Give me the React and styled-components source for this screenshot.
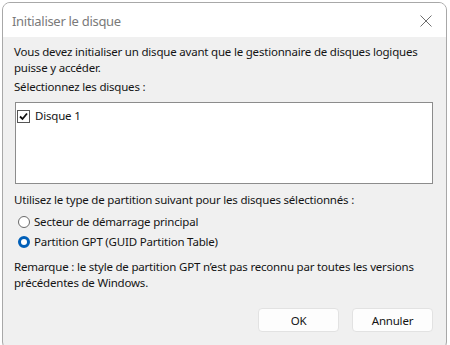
import React from 'react';
import styled, { createGlobalStyle } from 'styled-components';

//----------------------------------------
// Styled Components
//----------------------------------------

const GlobalStyle = createGlobalStyle`
  html, body {
    margin: 0;
    padding: 0;
    background: #ffffff;
    overflow: hidden;
  }
  body {
    font-family: "Noto Sans", "Open Sans", sans-serif;
  }
`;

const Window = styled.div`
  box-sizing: border-box;
  margin: 2px 0 0 2px;
  width: 445px;
  height: 348px;
  border: 1px solid #a8a8a8;
  border-radius: 8px;
  overflow: hidden;
  display: flex;
  flex-direction: column;
  background: #f0f0f0;
`;

const TitleBar = styled.div`
  height: 33px;
  flex: none;
  background: #ffffff;
  display: flex;
  align-items: center;
  justify-content: space-between;
  padding: 1px 9px 0 9px;
`;

const Title = styled.span`
  font-size: 13px;
  letter-spacing: -0.3px;
  color: #7a7a7a;
`;

const CloseButton = styled.button`
  width: 22px;
  height: 22px;
  border: none;
  background: transparent;
  padding: 0;
  display: flex;
  align-items: center;
  justify-content: center;
`;

const Body = styled.div`
  flex: 1;
  display: flex;
  flex-direction: column;
  padding: 7px 13px 0 11px;
  color: #141414;
  font-size: 11.5px;
  letter-spacing: -0.2px;
  line-height: 16px;
`;

const Text = styled.p`
  margin: 0 0 ${({ gap }) => gap || 0}px 0;
`;

const ListBox = styled.div`
  box-sizing: border-box;
  height: 82px;
  margin: 0 0 8px 1px;
  background: #ffffff;
  border: 1px solid #8c8c8c;
  padding: 5px 1px;
`;

const CheckRow = styled.label`
  display: flex;
  align-items: center;
  gap: 5px;
`;

const CheckBox = styled.span`
  box-sizing: border-box;
  width: 13px;
  height: 13px;
  border: 1px solid #555;
  background: #fff;
  display: flex;
  align-items: center;
  justify-content: center;
`;

const RadioGroup = styled.div`
  display: flex;
  flex-direction: column;
  gap: 4px;
  margin: 6px 0 9px 4px;
`;

const RadioRow = styled.label`
  display: flex;
  align-items: center;
  gap: 4px;
`;

const Radio = styled.span`
  box-sizing: border-box;
  width: 12px;
  height: 12px;
  border-radius: 50%;
  border: ${({ checked }) => (checked ? '3px solid #005fb8' : '1px solid #6a6a6a')};
  background: #fff;
`;

const ButtonRow = styled.div`
  display: flex;
  justify-content: flex-end;
  gap: 13px;
  margin-top: 17px;
`;

const Button = styled.button`
  box-sizing: border-box;
  width: 81px;
  height: 24px;
  background: #fdfdfd;
  border: 1px solid #e2e2e2;
  border-radius: 4px;
  font-family: "Noto Sans", "Open Sans", sans-serif;
  font-size: 11.5px;
  letter-spacing: -0.2px;
  color: #141414;
  padding: 0;
`;

//----------------------------------------
// React Component
//----------------------------------------

const App = () => (
  <>
    <GlobalStyle />
    <Window>
      <TitleBar>
        <Title>Initialiser le disque</Title>
        <CloseButton aria-label="Fermer">
          <svg width="12" height="12" viewBox="0 0 12 12">
            <path d="M0.5 0.5 L11.5 11.5 M11.5 0.5 L0.5 11.5" stroke="#6e6e6e" strokeWidth="1" />
          </svg>
        </CloseButton>
      </TitleBar>
      <Body>
        <Text gap={3}>
          Vous devez initialiser un disque avant que le gestionnaire de disques logiques puisse y accéder.
        </Text>
        <Text gap={7}>Sélectionnez les disques :</Text>
        <ListBox>
          <CheckRow>
            <CheckBox>
              <svg width="9" height="9" viewBox="0 0 9 9">
                <path d="M1 4.5 L3.5 7 L8 1.5" fill="none" stroke="#111" strokeWidth="1.8" />
              </svg>
            </CheckBox>
            Disque 1
          </CheckRow>
        </ListBox>
        <Text>Utilisez le type de partition suivant pour les disques sélectionnés :</Text>
        <RadioGroup>
          <RadioRow>
            <Radio />
            Secteur de démarrage principal
          </RadioRow>
          <RadioRow>
            <Radio checked />
            Partition GPT (GUID Partition Table)
          </RadioRow>
        </RadioGroup>
        <Text>
          Remarque : le style de partition GPT n’est pas reconnu par toutes les versions précédentes de Windows.
        </Text>
        <ButtonRow>
          <Button>OK</Button>
          <Button>Annuler</Button>
        </ButtonRow>
      </Body>
    </Window>
  </>
);

export default App;
